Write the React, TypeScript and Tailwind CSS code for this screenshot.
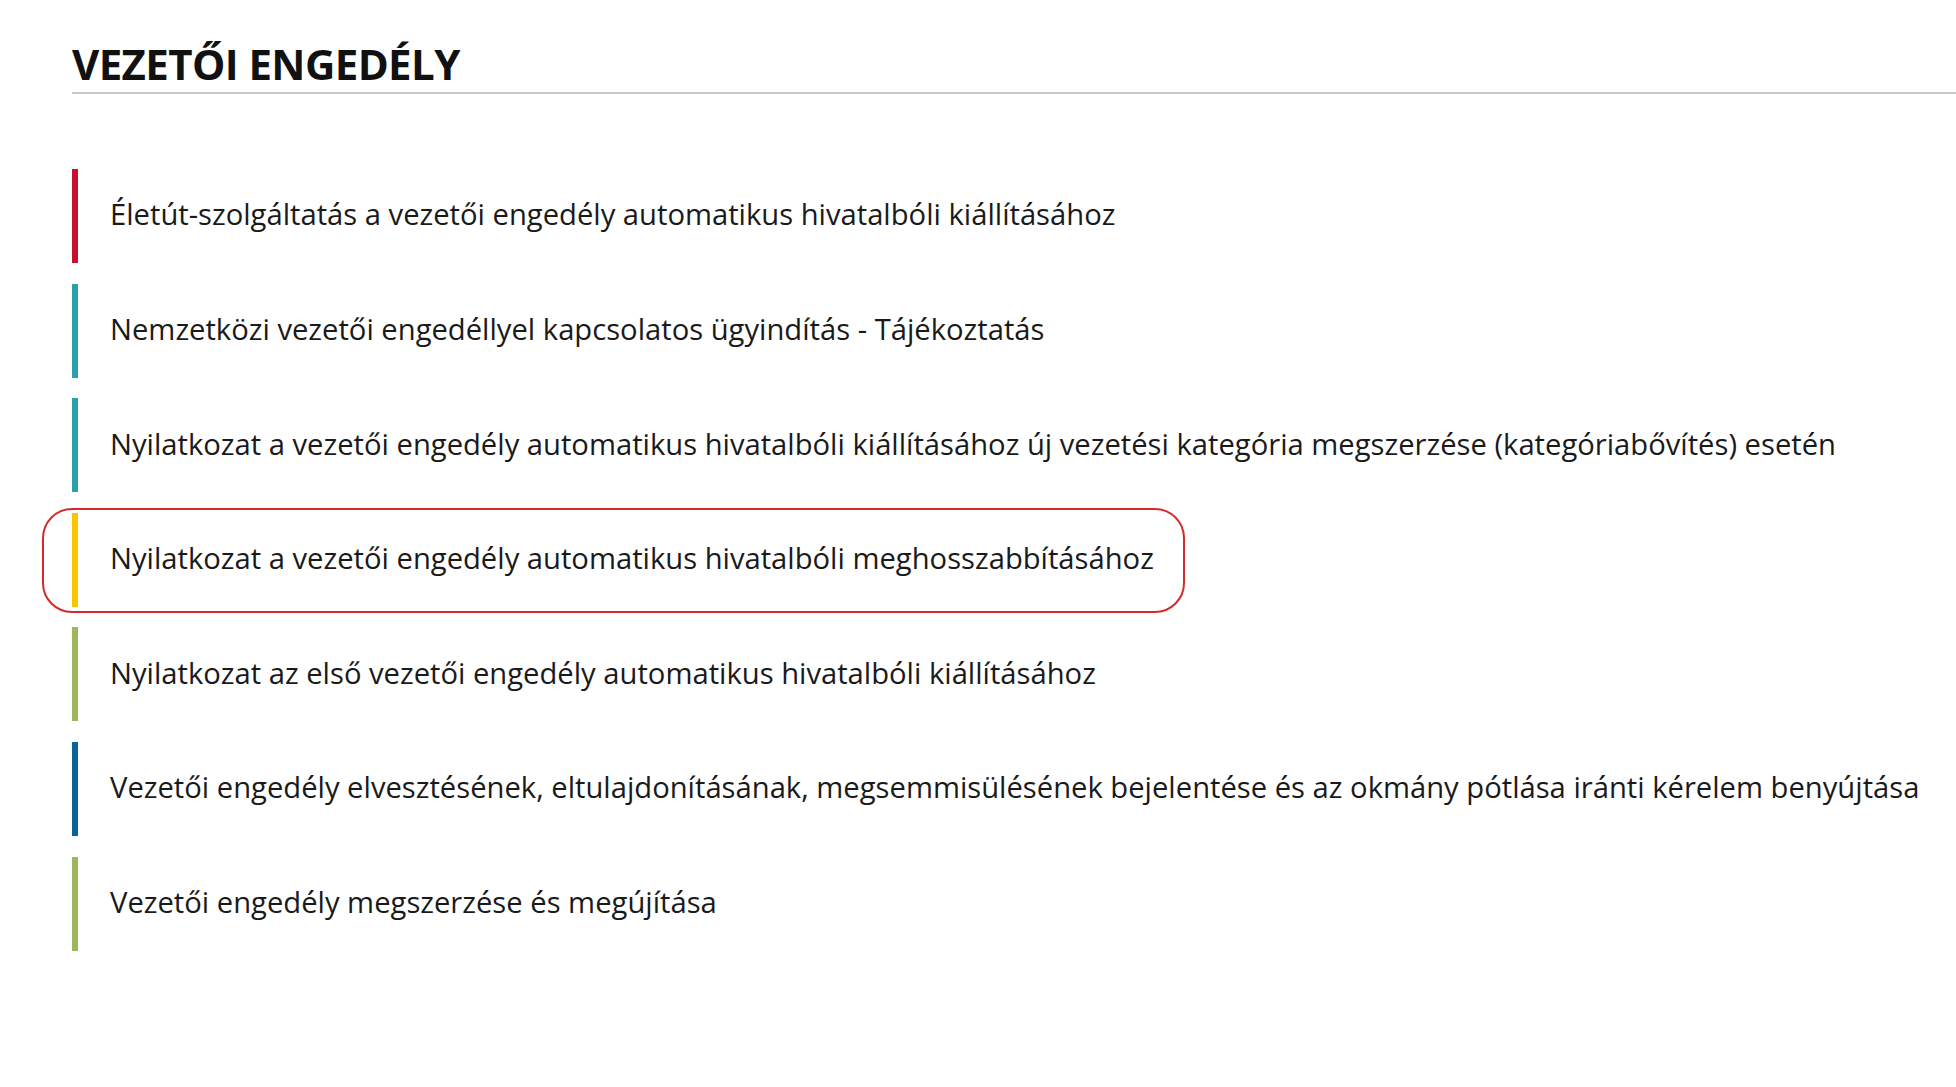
const items = [
  { label: 'Életút-szolgáltatás a vezetői engedély automatikus hivatalbóli kiállításához', color: 'bg-[#c8102e]' },
  { label: 'Nemzetközi vezetői engedéllyel kapcsolatos ügyindítás - Tájékoztatás', color: 'bg-[#2aa0aa]' },
  {
    label:
      'Nyilatkozat a vezetői engedély automatikus hivatalbóli kiállításához új vezetési kategória megszerzése (kategóriabővítés) esetén',
    color: 'bg-[#2aa0aa]',
  },
  { label: 'Nyilatkozat a vezetői engedély automatikus hivatalbóli meghosszabbításához', color: 'bg-[#f7c600]', marked: true },
  { label: 'Nyilatkozat az első vezetői engedély automatikus hivatalbóli kiállításához', color: 'bg-[#9cb85a]' },
  {
    label:
      'Vezetői engedély elvesztésének, eltulajdonításának, megsemmisülésének bejelentése és az okmány pótlása iránti kérelem benyújtása',
    color: 'bg-[#0b6499]',
  },
  { label: 'Vezetői engedély megszerzése és megújítása', color: 'bg-[#9cb85a]' },
]

export default function App() {
  return (
    <div
      className="min-h-screen bg-white pl-[72px] pt-[43px] text-[#111]"
      style={{ fontFamily: '"Open Sans", "Noto Sans", sans-serif' }}
    >
      <div className="border-b-2 border-[#c5cad1] pb-[7px]">
        <h1 className="text-[42px] font-bold uppercase leading-none tracking-[-0.6px]">Vezetői engedély</h1>
      </div>

      <ul className="mt-[75px] flex flex-col gap-[20.6px]">
        {items.map((item) => (
          <li key={item.label} className="relative flex h-[94px] w-fit items-stretch">
            {item.marked && (
              <span className="pointer-events-none absolute -bottom-[6px] -left-[30px] -right-[31px] -top-[5px] rounded-[30px] border-2 border-[#d42a2a]" />
            )}
            <span className={`w-[6px] shrink-0 ${item.color}`} />
            <span className="ml-[32px] flex items-center whitespace-nowrap pb-[2px] text-[29.2px] leading-none text-[#1a1a1a]">
              {item.label}
            </span>
          </li>
        ))}
      </ul>
    </div>
  )
}
